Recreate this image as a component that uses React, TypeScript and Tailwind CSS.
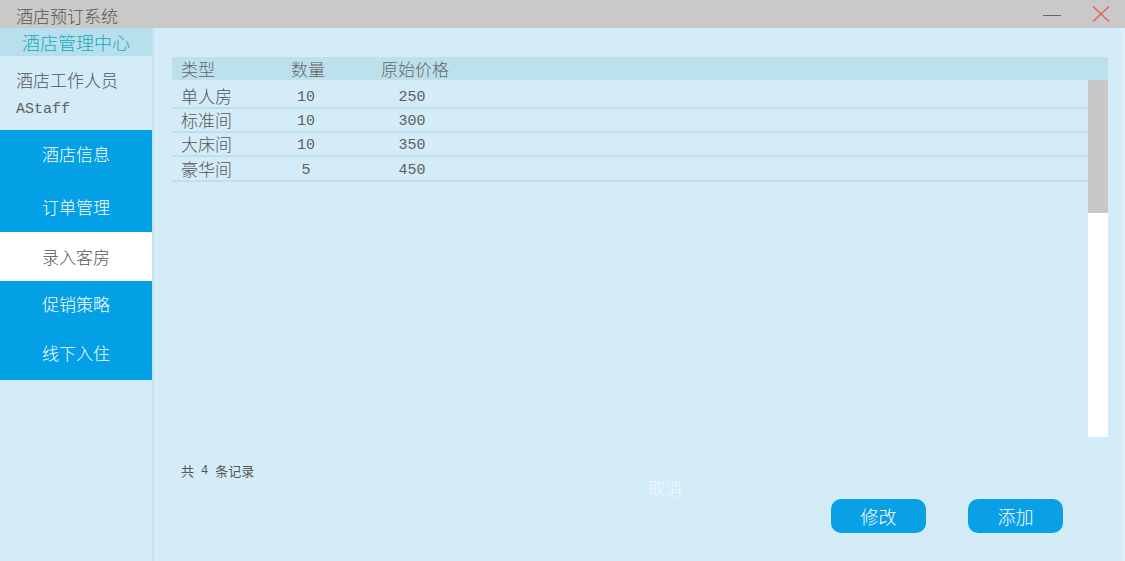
const cjk = "font-['Microsoft_YaHei','Noto_Sans_CJK_SC',sans-serif]"
const mono = "font-['Liberation_Mono','Noto_Sans_CJK_SC',monospace]"

const rooms = [
  { type: "单人房", count: 10, price: 250, h: "h-[24px]" },
  { type: "标准间", count: 10, price: 300, h: "h-[24px]" },
  { type: "大床间", count: 10, price: 350, h: "h-[24px]" },
  { type: "豪华间", count: 5, price: 450, h: "h-[25px]" },
]

function TitleBar() {
  return (
    <div className="flex h-[28px] items-center bg-[#c9c9c9] pl-[16px]">
      <span className={`${cjk} text-[17px] font-light leading-none text-[#555555] mt-[2px]`}>酒店预订系统</span>
      <div className="ml-auto flex items-center">
        <div className="mr-[31px] mt-[2px] h-[1px] w-[18px] bg-[#666666]" />
        <svg width="18" height="16" viewBox="0 0 18 16" className="mr-[15px]">
          <path d="M1 0.5 L17 15.5 M17 0.5 L1 15.5" stroke="#e2564f" strokeWidth="1.1" fill="none" />
        </svg>
      </div>
    </div>
  )
}

function Sidebar() {
  const blue = `${cjk} flex items-center justify-center text-[17px] font-light text-white`
  return (
    <div className="flex w-[152px] flex-col bg-[#d3ecf8]">
      <div className={`${cjk} flex h-[28px] items-center justify-center bg-[#b8e0ec] text-[18px] font-light text-[#12a9b7]`}>
        酒店管理中心
      </div>
      <div className="flex h-[74px] flex-col pl-[16px] pt-[12px]">
        <span className={`${cjk} text-[17px] font-light leading-[24px] text-[#555555]`}>酒店工作人员</span>
        <span className={`${mono} mt-[8px] text-[15px] leading-[20px] text-[#606060]`}>AStaff</span>
      </div>
      <div className="flex flex-col bg-[#03a0e6]">
        <div className={`${blue} h-[47px]`}>酒店信息</div>
        <div className={`${blue} h-[55px] pt-[5px]`}>订单管理</div>
      </div>
      <div className={`${cjk} flex h-[49px] items-center justify-center bg-white pt-[1px] text-[17px] font-light text-[#555555]`}>
        录入客房
      </div>
      <div className="flex flex-col bg-[#03a0e6]">
        <div className={`${blue} h-[46px]`}>促销策略</div>
        <div className={`${blue} h-[53px] pb-[2px]`}>线下入住</div>
      </div>
    </div>
  )
}

function RoomTable() {
  return (
    <div className="flex flex-col">
      <div className={`${cjk} flex h-[23px] items-center bg-[#bce1ed] text-[17px] font-light text-[#666666]`}>
        <div className="w-[91px] pl-[9px]">类型</div>
        <div className="w-[90px] text-center">数量</div>
        <div className="w-[124px] text-center">原始价格</div>
      </div>
      <div className="flex h-[357px]">
        <div className="flex flex-1 flex-col pt-[5px]">
          {rooms.map((r) => (
            <div key={r.type} className={`flex ${r.h} items-center border-b-2 border-[#bde0ec] text-[#555555]`}>
              <div className={`${cjk} w-[91px] pl-[9px] text-[17px] font-light`}>{r.type}</div>
              <div className={`${mono} mt-[5px] w-[90px] pr-[4px] text-center text-[15px] text-[#606060]`}>{r.count}</div>
              <div className={`${mono} mt-[5px] w-[124px] pr-[6px] text-center text-[15px] text-[#606060]`}>{r.price}</div>
            </div>
          ))}
        </div>
        <div className="flex w-[20px] flex-col bg-white">
          <div className="h-[133px] bg-[#c8c8c8]" />
        </div>
      </div>
    </div>
  )
}

export default function App() {
  return (
    <div className="flex h-[561px] w-[1125px] flex-col overflow-hidden bg-[#d3ecf8]">
      <TitleBar />
      <div className="flex flex-1">
        <Sidebar />
        <div className="w-[2px] bg-[#c4e4f1]" />
        <div className="flex flex-1 flex-col pl-[18px] pr-[13px] pt-[29px]">
          <RoomTable />
          <div className={`${cjk} mt-[26px] flex pl-[9px] text-[13px] leading-[16px] text-[#555555]`}>
            <span>共</span>
            <span className={`${mono} mx-[7px] text-[12px]`}>4</span>
            <span>条记录</span>
          </div>
          <div className="flex items-start">
            <span className={`${cjk} ml-[476px] -mt-[4px] text-[17px] font-light text-white/70`}>取消</span>
            <div className="ml-auto mr-[45px] mt-[20px] flex gap-[42px]">
              <button className={`${cjk} h-[34px] w-[95px] rounded-[10px] bg-[#0aa0e6] text-[18px] font-light text-white`}>修改</button>
              <button className={`${cjk} h-[34px] w-[95px] rounded-[10px] bg-[#0aa0e6] text-[18px] font-light text-white`}>添加</button>
            </div>
          </div>
        </div>
        <div className="w-[4px] bg-[#dcf0f9]" />
      </div>
    </div>
  )
}
